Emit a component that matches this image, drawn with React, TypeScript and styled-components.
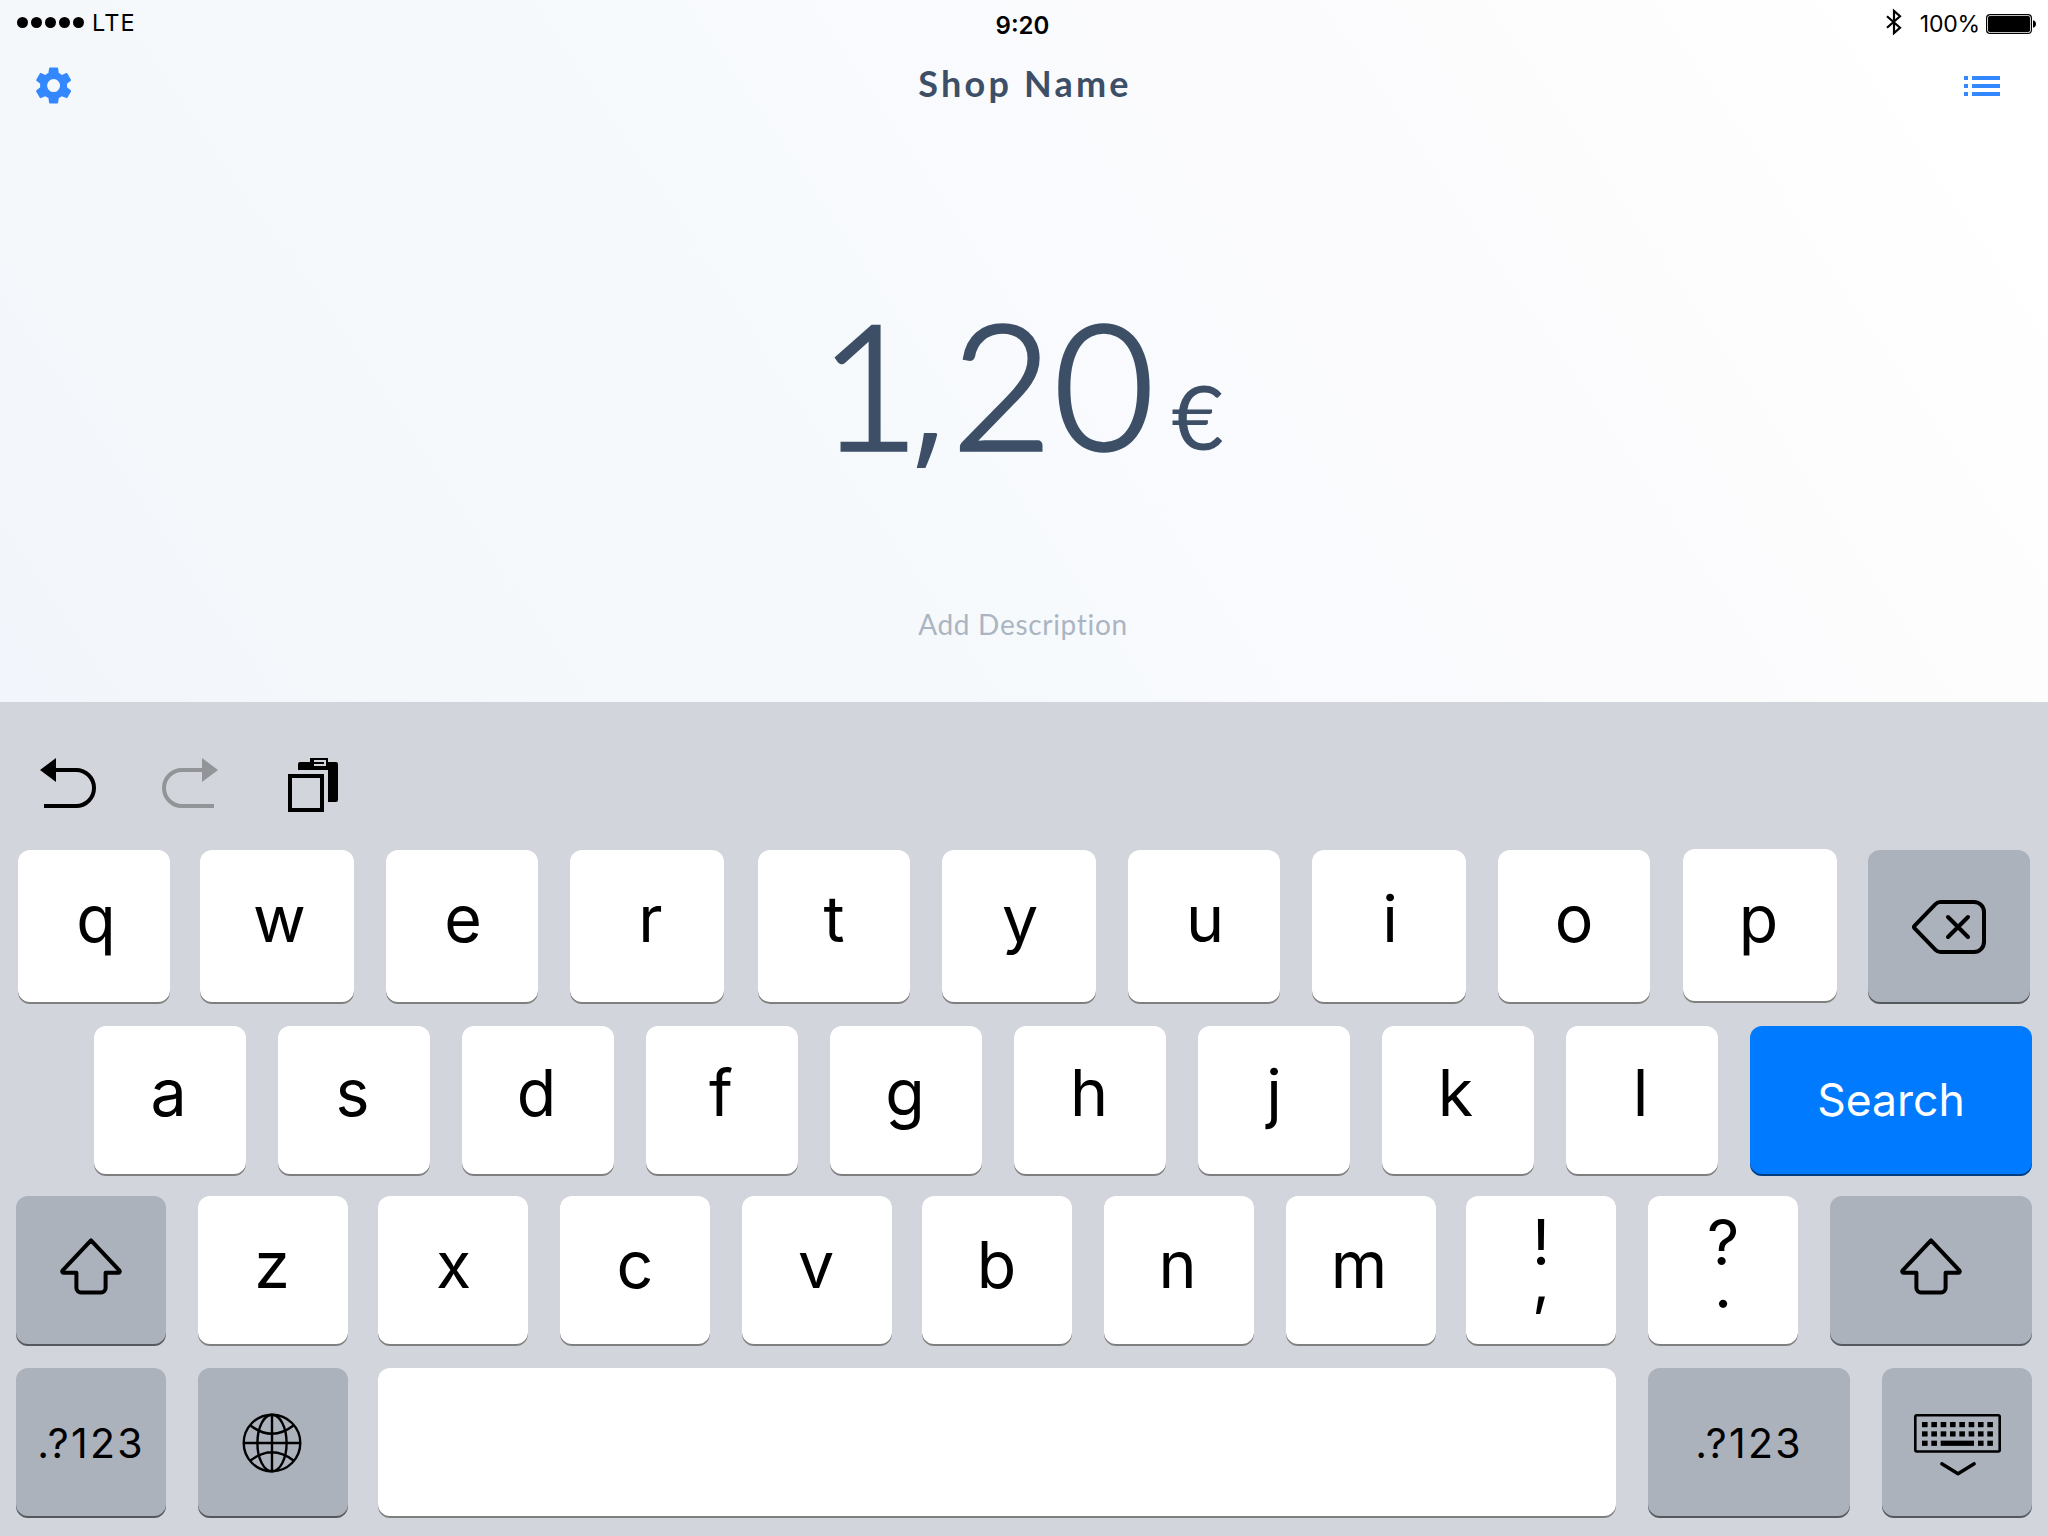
import React from "react";
import styled, { createGlobalStyle } from "styled-components";

const uiFont = `Inter, "Liberation Sans", sans-serif`;
const brandFont = `Lato, "Open Sans", sans-serif`;
const ink = "#3d4f66";
const blue = "#3388ff";

const GlobalStyle = createGlobalStyle`
  *, *::before, *::after { box-sizing: border-box; }
  html, body { margin: 0; padding: 0; }
  body { width: 2048px; height: 1536px; overflow: hidden; }
  svg { display: block; }
`;

const Screen = styled.div`
  display: flex;
  flex-direction: column;
  width: 2048px;
  height: 1536px;
  font-family: ${uiFont};
  color: #000;
`;

const Checkout = styled.main`
  display: flex;
  flex-direction: column;
  height: 702px;
  background: linear-gradient(56deg, #f2f6fc 0%, #f4f8fb 14%, #f5f9fc 35%, #f8fafd 50%, #fbfbfd 65%, #ffffff 95%);
`;

const StatusBar = styled.div`
  display: grid;
  grid-template-columns: 1fr auto 1fr;
  height: 45px;
  padding: 0 12px 0 17px;
`;

const StatusLeft = styled.div`
  display: flex;
  align-items: center;
  font-size: 23.5px;
  line-height: 28px;
  letter-spacing: 1.1px;
`;

const Signal = styled.div`
  display: flex;
  gap: 3px;
  margin-right: 8px;
`;

const Dot = styled.span`
  width: 11px;
  height: 11px;
  border-radius: 50%;
  background: #000;
`;

const Clock = styled.div`
  padding: 11px 8px 0 0;
  font-size: 24px;
  line-height: 29px;
  font-weight: 600;
`;

const StatusRight = styled.div`
  display: flex;
  align-items: center;
  justify-content: flex-end;
  padding-top: 3px;
  font-size: 23px;
  line-height: 28px;
  letter-spacing: -0.2px;
`;

const BluetoothIcon = styled.svg`
  margin: -4px 18px 0 0;
`;

const BatteryIcon = styled.svg`
  margin-left: 6px;
`;

const Header = styled.header`
  display: grid;
  grid-template-columns: 1fr auto 1fr;
  align-items: center;
  height: 82px;
  padding: 0 48px 0 32px;
`;

const Title = styled.h1`
  margin: 0;
  padding: 0 0 6px 18px;
  font-family: ${brandFont};
  font-size: 36px;
  line-height: 44px;
  font-weight: 700;
  letter-spacing: 3.2px;
  color: ${ink};
`;

const HeaderEnd = styled.div`
  justify-self: end;
`;

const Amount = styled.div`
  display: flex;
  align-items: baseline;
  justify-content: center;
  height: 176px;
  margin-top: 168px;
  padding-right: 5px;
  font-family: ${brandFont};
  font-weight: 300;
  font-size: 173px;
  line-height: 176px;
  color: ${ink};
  -webkit-text-stroke: 3.6px ${ink};
`;

const Digits = styled.span<{ $track?: number }>`
  letter-spacing: ${(p) => p.$track ?? 0}px;
`;

const Comma = styled.span`
  font-family: "Open Sans", sans-serif;
  font-weight: 400;
  font-size: 142px;
  line-height: 1;
  letter-spacing: 4px;
  -webkit-text-stroke: 0;
`;

const Currency = styled.span`
  margin-left: 16px;
  font-size: 90px;
  font-weight: 400;
  line-height: 1;
  -webkit-text-stroke: 0;
`;

const Description = styled.div`
  margin-top: 133px;
  padding-right: 2px;
  font-family: ${brandFont};
  font-size: 28px;
  line-height: 40px;
  letter-spacing: 0.7px;
  text-align: center;
  color: #abb5c2;
`;

const Keyboard = styled.section`
  display: flex;
  flex-direction: column;
  height: 834px;
  background: #d2d5db;
`;

const Shortcuts = styled.div`
  display: flex;
  align-items: flex-start;
  height: 148px;
  padding: 56px 0 0 40px;
`;

const Shortcut = styled.div<{ $gap?: number }>`
  margin-left: ${(p) => p.$gap ?? 0}px;
`;

const Row = styled.div<{ $start: number; $height?: number; $after?: number }>`
  display: flex;
  height: ${(p) => p.$height ?? 150}px;
  padding-left: ${(p) => p.$start}px;
  margin-bottom: ${(p) => p.$after ?? 0}px;
`;

type Tone = "light" | "dark" | "action";
const tones: Record<Tone, string> = { light: "#ffffff", dark: "#abb2bc", action: "#007aff" };

const Key = styled.div<{
  $width: number;
  $gap?: number;
  $tone?: Tone;
  $lift?: number;
  $drop?: number;
  $rise?: number;
  $pull?: number;
}>`
  display: flex;
  flex: none;
  align-items: center;
  justify-content: center;
  width: ${(p) => p.$width}px;
  height: calc(100% - ${(p) => p.$rise ?? 0}px);
  margin-left: ${(p) => p.$gap ?? 0}px;
  margin-top: ${(p) => -(p.$rise ?? 0)}px;
  padding: ${(p) => p.$drop ?? 0}px ${(p) => p.$pull ?? 0}px ${(p) => p.$lift ?? 0}px 0;
  border-radius: 12px;
  background: ${(p) => tones[p.$tone ?? "light"]};
  box-shadow: inset 0 -2px 0 rgba(0, 0, 0, 0.5);
`;

const Letter = styled.span<{ $nudge?: number }>`
  padding-left: ${(p) => Math.max(0, (p.$nudge ?? 0) * 2)}px;
  padding-right: ${(p) => Math.max(0, -(p.$nudge ?? 0) * 2)}px;
  font-size: 64.5px;
  line-height: 78px;
`;

const Stack = styled.span`
  display: flex;
  flex-direction: column;
  align-items: center;
  font-size: 63px;
`;

const Mark = styled.span<{ $height: number }>`
  line-height: ${(p) => p.$height}px;
`;

const Word = styled.span<{ $size: number; $color?: string; $track?: number }>`
  font-size: ${(p) => p.$size}px;
  line-height: 54px;
  letter-spacing: ${(p) => p.$track ?? 0}px;
  color: ${(p) => p.$color ?? "#000"};
`;

type LetterKey = { ch: string; w: number; gap: number; nudge?: number };

const topRow: LetterKey[] = [
  { ch: "q", w: 152, gap: 0, nudge: 2 },
  { ch: "w", w: 154, gap: 30, nudge: 2.5 },
  { ch: "e", w: 152, gap: 32, nudge: 1 },
  { ch: "r", w: 154, gap: 32, nudge: 3.5 },
  { ch: "t", w: 152, gap: 34, nudge: 0 },
  { ch: "y", w: 154, gap: 32, nudge: 1 },
  { ch: "u", w: 152, gap: 32, nudge: 1 },
  { ch: "i", w: 154, gap: 32, nudge: 1 },
  { ch: "o", w: 152, gap: 32, nudge: 0 },
];

const homeRow: LetterKey[] = [
  { ch: "a", w: 152, gap: 0, nudge: -1.5 },
  { ch: "s", w: 152, gap: 32, nudge: -1.5 },
  { ch: "d", w: 152, gap: 32, nudge: -1.5 },
  { ch: "f", w: 152, gap: 32, nudge: -1 },
  { ch: "g", w: 152, gap: 32, nudge: -1 },
  { ch: "h", w: 152, gap: 32, nudge: -1 },
  { ch: "j", w: 152, gap: 32, nudge: 0 },
  { ch: "k", w: 152, gap: 32, nudge: -2.5 },
  { ch: "l", w: 152, gap: 32, nudge: -1.5 },
];

const bottomRow: LetterKey[] = [
  { ch: "z", w: 150, gap: 32, nudge: -1 },
  { ch: "x", w: 150, gap: 30, nudge: 0.5 },
  { ch: "c", w: 150, gap: 32, nudge: 0 },
  { ch: "v", w: 150, gap: 32, nudge: -1 },
  { ch: "b", w: 150, gap: 30, nudge: -0.5 },
  { ch: "n", w: 150, gap: 32, nudge: -1.5 },
  { ch: "m", w: 150, gap: 32, nudge: -2 },
];

const Letters = ({ keys, lift }: { keys: LetterKey[]; lift: number }) => (
  <>
    {keys.map((k) => (
      <Key key={k.ch} $width={k.w} $gap={k.gap} $lift={lift}>
        <Letter $nudge={k.nudge}>{k.ch}</Letter>
      </Key>
    ))}
  </>
);

const Gear = () => (
  <svg width="43.2" height="43.2" viewBox="0 0 24 24" fill={blue}>
    <path d="M19.43 12.98c.04-.32.07-.64.07-.98s-.03-.66-.07-.98l2.11-1.65c.19-.15.24-.42.12-.64l-2-3.46c-.12-.22-.39-.3-.61-.22l-2.49 1c-.52-.4-1.08-.73-1.69-.98l-.38-2.65C14.46 2.18 14.25 2 14 2h-4c-.25 0-.46.18-.49.42l-.38 2.65c-.61.25-1.17.59-1.69.98l-2.49-1c-.23-.09-.49 0-.61.22l-2 3.46c-.13.22-.07.49.12.64l2.11 1.65c-.04.32-.07.65-.07.98s.03.66.07.98l-2.11 1.65c-.19.15-.24.42-.12.64l2 3.46c.12.22.39.3.61.22l2.49-1c.52.4 1.08.73 1.69.98l.38 2.65c.03.24.24.42.49.42h4c.25 0 .46-.18.49-.42l.38-2.65c.61-.25 1.17-.59 1.69-.98l2.49 1c.23.09.49 0 .61-.22l2-3.46c.12-.22.07-.49-.12-.64l-2.11-1.65zM12 15.6a3.6 3.6 0 1 1 0-7.2 3.6 3.6 0 0 1 0 7.2z" />
  </svg>
);

const ListGlyph = () => (
  <svg width="36" height="20" viewBox="0 0 36 20" fill={blue} shapeRendering="crispEdges">
    <path d="M0 0h4v4H0zM8 0h28v4H8zM0 8h4v4H0zM8 8h28v4H8zM0 16h4v4H0zM8 16h28v4H8z" />
  </svg>
);

const Undo = () => (
  <svg width="56" height="50" viewBox="0 0 56 50">
    <path d="M0 12L16 0v24z" />
    <path d="M15 12h21a18 18 0 0 1 0 36H4" fill="none" stroke="#000" strokeWidth="4" />
  </svg>
);

const Redo = () => (
  <svg width="56" height="50" viewBox="0 0 56 50">
    <path d="M56 12L40 0v24z" fill="#929497" />
    <path d="M41 12H20a18 18 0 0 0 0 36h32" fill="none" stroke="#929497" strokeWidth="4" />
  </svg>
);

const Paste = () => (
  <svg width="50" height="54" viewBox="0 0 50 54">
    <path d="M10 12V6a2 2 0 0 1 2-2h36a2 2 0 0 1 2 2v36a2 2 0 0 1-2 2h-8V12z" />
    <path d="M22 0h18v10H22z" />
    <path d="M26 2h12v6H26z" fill="#d2d5db" />
    <path d="M26 4h10v2H26z" />
    <path d="M2 18h32v34H2z" fill="none" stroke="#000" strokeWidth="4" />
  </svg>
);

const Backspace = () => (
  <svg width="74" height="54" viewBox="0 0 74 54" fill="none" stroke="#000" strokeWidth="4" strokeLinecap="round">
    <path d="M28.5 2H62a10 10 0 0 1 10 10v30a10 10 0 0 1-10 10H28.5a7 7 0 0 1-5-2.1L2.7 28.4a2 2 0 0 1 0-2.8L23.5 4.1A7 7 0 0 1 28.5 2z" />
    <path d="M36 17l20 20M56 17L36 37" />
  </svg>
);

const Shift = () => (
  <svg width="62" height="57" viewBox="0 0 62 57" fill="none" stroke="#000" strokeWidth="4" strokeLinejoin="round">
    <path d="M31 2.4L2.5 32.6a1.4 1.4 0 0 0 1 2.2H16.4V50a4.5 4.5 0 0 0 4.5 4.5h20.2a4.5 4.5 0 0 0 4.5-4.5V34.8H58.5a1.4 1.4 0 0 0 1-2.2z" />
  </svg>
);

const Globe = () => (
  <svg width="60" height="60" viewBox="-30 -30 60 60" fill="none" stroke="#000" strokeWidth="2.4">
    <circle r="28.3" />
    <ellipse rx="14.6" ry="28.3" />
    <path d="M0-28V28M-28 0H28M-21.5-17.5Q0-1 21.5-17.5M-21.5 17.5Q0 1 21.5 17.5" />
  </svg>
);

const HideKeyboard = () => {
  const cols = [0, 1, 2, 3, 4, 5, 6, 7];
  return (
    <svg width="87" height="62" viewBox="0 0 87 62">
      <rect x="1.3" y="1.3" width="84.4" height="36.2" rx="1.5" fill="none" stroke="#000" strokeWidth="2.6" />
      {[0, 1, 2].map((r) =>
        cols
          .filter((c) => r < 2 || c < 2 || c > 5)
          .map((c) => (
            <rect key={`${r}-${c}`} x={8 + c * 9.33} y={8 + r * 9.33} width="5.6" height="5.2" />
          ))
      )}
      <rect x="26.7" y="26.66" width="33.3" height="5.2" />
      <path d="M27.8 49.8l16.2 10 16.2-10" fill="none" stroke="#000" strokeWidth="3.4" strokeLinecap="round" strokeLinejoin="round" />
    </svg>
  );
};

export default function App() {
  return (
    <Screen>
      <GlobalStyle />
      <Checkout>
        <StatusBar>
          <StatusLeft>
            <Signal>
              {[0, 1, 2, 3, 4].map((i) => (
                <Dot key={i} />
              ))}
            </Signal>
            LTE
          </StatusLeft>
          <Clock>9:20</Clock>
          <StatusRight>
            <BluetoothIcon width="16" height="28" viewBox="0 0 16 28" fill="none" stroke="#000" strokeWidth="2.2">
              <path d="M1 8.3L14 19.8 8 25V3l6 5.2L1 19.7" />
            </BluetoothIcon>
            100%
            <BatteryIcon width="50" height="20" viewBox="0 0 50 20">
              <rect x="0.6" y="0.6" width="44.8" height="18.8" rx="3.5" fill="none" stroke="#000" strokeWidth="1.2" />
              <rect x="2" y="2" width="42" height="16" rx="1.8" />
              <path d="M47 6.2c1.8.4 3 1.9 3 3.8s-1.2 3.4-3 3.8z" />
            </BatteryIcon>
          </StatusRight>
        </StatusBar>
        <Header>
          <Gear />
          <Title>Shop Name</Title>
          <HeaderEnd>
            <ListGlyph />
          </HeaderEnd>
        </Header>
        <Amount>
          <Digits $track={-8.5}>1</Digits>
          <Comma>,</Comma>
          <Digits $track={1.5}>20</Digits>
          <Currency>€</Currency>
        </Amount>
        <Description>Add Description</Description>
      </Checkout>

      <Keyboard>
        <Shortcuts>
          <Shortcut>
            <Undo />
          </Shortcut>
          <Shortcut $gap={66}>
            <Redo />
          </Shortcut>
          <Shortcut $gap={70}>
            <Paste />
          </Shortcut>
        </Shortcuts>

        <Row $start={18} $height={154} $after={22}>
          <Letters keys={topRow} lift={16} />
          <Key $width={154} $gap={32.5} $lift={15} $rise={0.6}>
            <Letter $nudge={-1}>p</Letter>
          </Key>
          <Key $width={162} $gap={31.5} $tone="dark">
            <Backspace />
          </Key>
        </Row>

        <Row $start={94} $after={20}>
          <Letters keys={homeRow} lift={16} />
          <Key $width={282} $gap={32} $tone="action" $lift={3}>
            <Word $size={44.5} $color="#fff">
              Search
            </Word>
          </Key>
        </Row>

        <Row $start={16} $after={22}>
          <Key $width={150} $tone="dark" $lift={9}>
            <Shift />
          </Key>
          <Letters keys={bottomRow} lift={12} />
          <Key $width={150} $gap={30} $lift={24}>
            <Stack>
              <Mark $height={43}>!</Mark>
              <Mark $height={33}>,</Mark>
            </Stack>
          </Key>
          <Key $width={150} $gap={32} $lift={15}>
            <Stack>
              <Mark $height={43}>?</Mark>
              <Mark $height={43}>.</Mark>
            </Stack>
          </Key>
          <Key $width={202} $gap={32} $tone="dark" $lift={9}>
            <Shift />
          </Key>
        </Row>

        <Row $start={16}>
          <Key $width={150} $tone="dark">
            <Word $size={41} $track={2.3}>.?123</Word>
          </Key>
          <Key $width={150} $gap={32} $tone="dark" $lift={1} $pull={2}>
            <Globe />
          </Key>
          <Key $width={1238} $gap={30} />
          <Key $width={202} $gap={32} $tone="dark">
            <Word $size={41} $track={2.3}>.?123</Word>
          </Key>
          <Key $width={150} $gap={32} $tone="dark" $drop={4}>
            <HideKeyboard />
          </Key>
        </Row>
      </Keyboard>
    </Screen>
  );
}
